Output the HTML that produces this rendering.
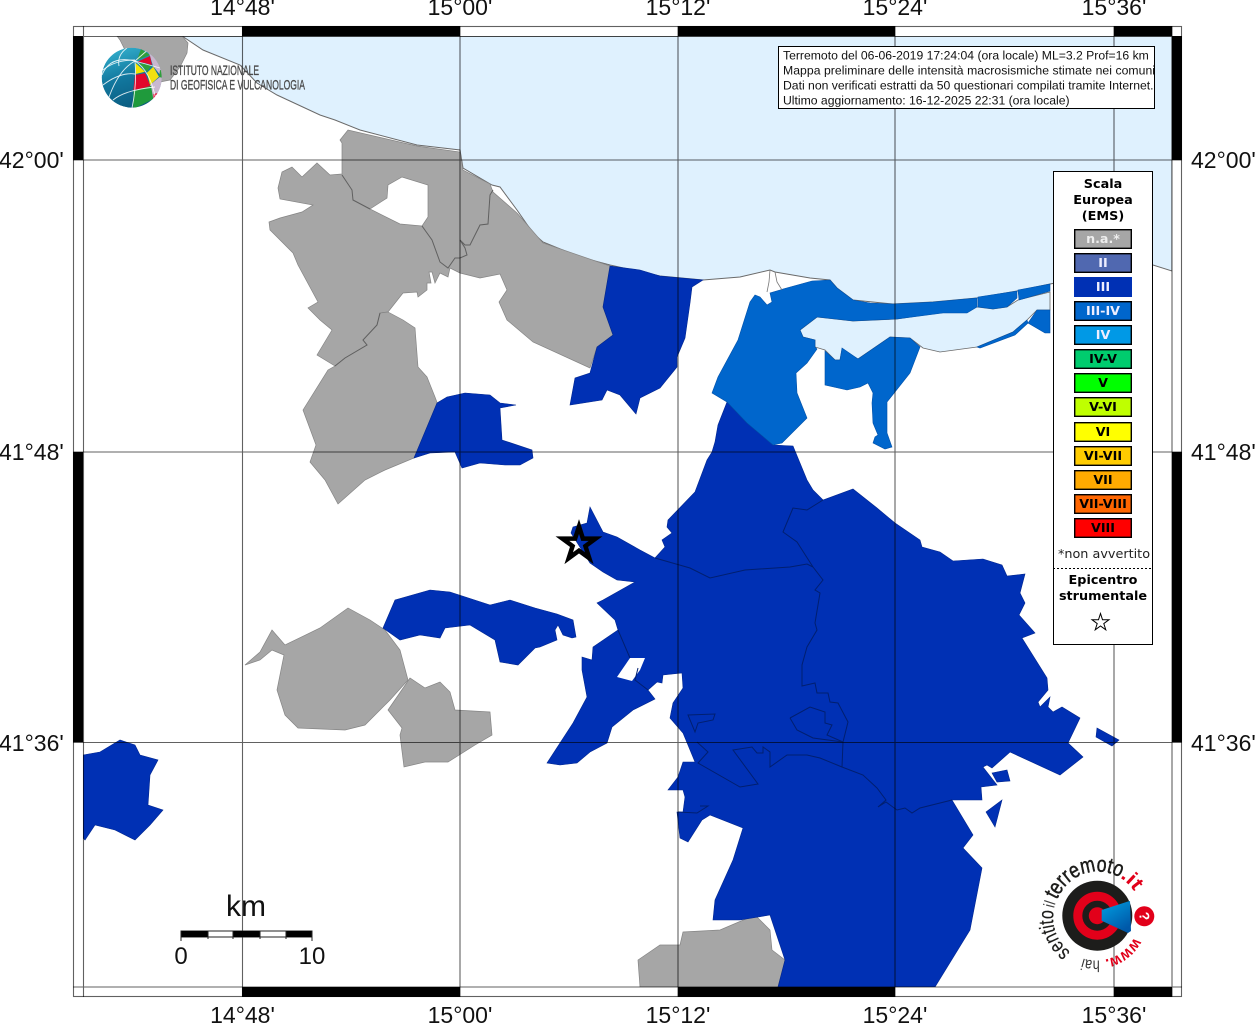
<!DOCTYPE html>
<html><head><meta charset="utf-8"><title>Mappa</title>
<style>
html,body{margin:0;padding:0;background:#fff;width:1255px;height:1024px;overflow:hidden}
svg{display:block}
.lab{font:23px "Liberation Sans",sans-serif;fill:#111}
.sw{font:bold 12.7px "DejaVu Sans",sans-serif;text-anchor:middle}
.lg{font:bold 12.8px "DejaVu Sans",sans-serif;text-anchor:middle;fill:#000}
.info{font:12.2px "Liberation Sans",sans-serif;fill:#111}
.g{fill:#a6a6a6;stroke:#858585;stroke-width:.7}
.b{fill:#0030b4;stroke:#00268f;stroke-width:.6}
.c{fill:#0066cc;stroke:#0050a8;stroke-width:.6}
.il{fill:none;stroke:#001f70;stroke-width:1}
.gl{fill:none;stroke:#606060;stroke-width:1}
</style></head><body>
<svg width="1255" height="1024" viewBox="0 0 1255 1024" xmlns="http://www.w3.org/2000/svg">
<defs>
<clipPath id="map"><rect x="83" y="36" width="1089" height="951"/></clipPath>
<clipPath id="gc"><circle cx="131.7" cy="77.7" r="30"/></clipPath>
<linearGradient id="gb" x1="0.2" y1="0" x2="0.5" y2="1"><stop offset="0" stop-color="#33b0cd"/><stop offset=".5" stop-color="#12789f"/><stop offset="1" stop-color="#0b5c80"/></linearGradient>
<linearGradient id="cone" x1="0" y1="0" x2="0.6" y2="1"><stop offset="0" stop-color="#00a0e3"/><stop offset="1" stop-color="#0058a8"/></linearGradient>
<path id="arc" d="M1134.2 937.5A43 43 0 1 1 1059.8 894.5A43 43 0 1 1 1134.2 937.5"/>
</defs>
<rect width="1255" height="1024" fill="#fff"/>
<g clip-path="url(#map)">
<polygon fill="#dff1fe" stroke="#6a6a6a" stroke-width="1" points="182,36 203,50 240,65 257,83 277,95 320,115 335,120 360,130 417,145 460,150 463,168 492,185 500,187 517,210 533,233 543,242 580,257 610,265 660,276 703,280 740,277 770,270 775,272 810,278 830,280 837,288 853,300 893,304 933,302 977,298 1017,291 1050,284 1153,265 1172,271 1172,36"/>
<polygon fill="#dff1fe" stroke="#6a6a6a" stroke-width=".8" points="800,330 817,317 853,321 897,319 977,307 993,309 1007,307 1018,300 1050,292 1050,310 1037,310 1027,320 1013,332 977,347 940,352 923,348 910,338 890,337 858,359 842,350 840,360 835,360 825,350 815,347 815,340 803,337"/>
<polygon class="g" points="117,36 182,36 188,43 187,53 180,67 170,80 160,82 130,60 120,40"/>
<path class="g" fill-rule="evenodd" d="M340,140 348,130 417,146 460,152 463,170 490,184 493,192 517,213 543,243 610,266 603,307 613,335 597,347 590,368 533,342 507,320 499,302 507,290 500,274 480,278 460,273 450,268 448,277 440,273 435,283 432,272 429,272 431,283 427,283 427,290 418,297 417,292 403,293 388,312 380,313 377,325 363,340 367,345 345,358 335,366 317,355 332,330 320,320 308,308 318,302 298,265 293,253 270,230 269,222 280,218 302,212 313,205 280,199 278,188 282,172 292,167 302,177 317,163 330,175 342,174 342,143Z M370,209 387,198 388,185 402,177 428,185 428,217 422,226 400,224Z"/>
<polygon class="g" points="388,312 403,320 415,328 418,367 427,377 435,397 438,405 414,458 385,470 365,480 338,504 325,480 310,462 316,445 303,410 328,370 335,366 345,358 367,345 363,340 377,325 380,313"/>
<polygon class="g" points="245,665 260,652 272,630 285,645 320,628 348,608 370,620 385,630 400,650 408,680 390,700 365,725 345,730 298,728 285,715 277,690 284,655 272,650 260,660"/>
<polygon class="g" points="388,710 410,678 425,688 440,682 450,692 455,710 490,712 492,735 475,745 448,762 425,762 404,767 400,735 402,728"/>
<polygon class="g" points="640,987 638,960 660,945 680,945 683,932 720,930 755,915 770,930 772,950 785,960 778,987"/>
<polyline class="gl" points="342,175 352,190 353,200 370,209"/>
<polyline class="gl" points="422,226 432,240 440,262 448,268 455,258 460,258 467,255 465,248 460,240 465,245 470,245 480,225 488,224 490,195 493,190"/>
<polyline class="gl" points="380,313 377,325 363,340 367,345 345,358 335,366"/>
<polygon class="b" points="610,266 640,270 660,276 703,280 692,287 690,303 685,338 677,357 677,367 660,388 640,398 636,414 620,395 607,390 602,400 570,405 575,378 590,373 597,347 613,335 603,307"/>
<polygon class="b" points="414,458 437,403 447,397 465,393 490,395 500,403 516,405 500,408 502,440 532,450 533,458 520,465 505,465 480,463 462,468 455,452 430,453"/>
<polygon class="b" points="383,628 395,600 430,590 450,592 490,605 510,600 535,608 557,614 573,620 576,637 572,638 563,635 558,625 555,630 557,640 540,647 535,648 518,665 500,662 495,640 470,625 445,628 440,638 420,635 400,640"/>
<polygon class="b" points="83,755 100,752 120,740 135,745 140,755 158,760 150,775 148,805 163,810 150,825 135,840 115,830 95,825 85,840 83,838"/>
<path class="b" d="M590,507 603,532 617,537 640,550 655,558 665,547 662,540 672,533 667,527 668,520 695,492 707,460 712,452 715,442 718,425 727,402 747,423 773,445 793,446 807,480 813,490 823,500 853,489 877,508 895,523 920,540 922,547 940,552 953,561 983,559 1002,565 1007,576 1025,574 1020,593 1025,603 1019,615 1035,633 1022,638 1047,678 1048,690 1038,702 1040,707 1050,697 1048,707 1053,712 1062,707 1080,718 1068,743 1083,757 1060,775 1010,752 992,768 987,765 983,767 997,785 981,787 982,800 952,800 973,835 963,848 982,868 970,930 935,987 778,987 785,960 770,915 740,920 713,920 715,900 733,860 743,828 710,815 702,820 688,842 680,838 677,812 683,812 685,797 683,790 668,790 678,777 683,762 695,762 683,733 670,718 673,703 683,688 682,673 663,675 662,683 657,682 648,690 655,699 633,710 612,727 607,743 590,752 577,763 560,765 547,763 573,723 587,697 582,670 582,657 592,660 593,647 618,630 615,620 597,603 603,600 635,582 617,580 603,572 590,563 571,533 573,527 587,523Z"/>
<polygon fill="#fff" points="617,677 630,658 645,658 640,670 632,681"/>
<polygon class="b" points="1097,728 1119,740 1112,746 1096,737"/>
<polygon class="b" points="992,773 1007,770 1010,781 997,782"/>
<polygon class="b" points="986,812 1002,800 995,827"/>
<g class="il">
<polyline points="823,500 807,510 793,508 783,532 797,542 813,567 823,580 815,590 820,593 815,623 817,630 807,647 802,665 802,686 815,683 817,693 828,693 830,702 838,703 848,722 843,742 842,767 863,775 877,788 886,800 878,807 886,802 897,810 905,808 912,813 920,808 952,800"/>
<polyline points="655,558 690,568 710,578 745,570 790,567 807,564 813,567"/>
<polyline points="790,718 810,707 825,712 825,723 832,725 827,735 843,742 813,738 797,730 790,718"/>
<polyline points="697,742 708,752 698,763 740,787 758,784 733,750 752,747 757,753 763,753 763,747 770,752 770,767 787,755 807,755 820,758 842,767"/>
<polyline points="618,630 630,658"/><polyline points="638,668 635,680 648,690"/>
<polygon points="688,715 715,714 713,720 698,723 695,732"/>
<polyline points="678,812 697,813 708,806 700,806"/>
</g>
<path class="c" d="M812,281 830,280 837,288 853,300 870,303 893,304 933,302 977,298 977,307 967,313 943,313 897,319 853,321 817,317 800,330 803,337 815,340 815,347 817,349 807,363 796,373 797,393 807,418 782,443 773,445 747,423 727,402 712,393 718,377 738,340 750,302 755,295 760,297 767,305 772,302 770,293 780,290 783,289Z"/>
<path class="c" d="M825,351 835,360 840,360 842,348 858,359 890,337 910,338 920,347 910,373 887,402 887,433 892,447 885,449 873,443 875,437 878,435 873,423 872,403 873,393 868,383 860,387 847,390 825,385Z"/>
<polygon class="c" points="978,297 1017,291 1017,298 1007,307 993,309 978,307"/>
<polygon class="c" points="1018,290 1050,284 1050,291 1019,300"/>
<polygon class="c" points="1028,323 1037,310 1050,310 1050,333 1045,333"/>
<polygon class="c" points="977,347 1013,332 1027,320 1028,323 1015,335 980,348"/>
<polyline fill="none" stroke="#777" stroke-width=".8" points="770,270 769,282 767,292"/>
<polyline fill="none" stroke="#777" stroke-width=".8" points="775,272 777,282 782,290"/>
</g>
<g stroke="#000" fill="none" stroke-width="4.5"><polygon points="579,526.5 582.9,538.6 595.6,538.6 585.4,546.1 589.3,558.2 579,550.7 568.7,558.2 572.6,546.1 562.4,538.6 575.1,538.6"/></g>
<!-- frame -->
<g fill="#000">
<rect x="242" y="26" width="218" height="10"/><rect x="678" y="26" width="217" height="10"/><rect x="1114" y="26" width="58" height="10"/>
<rect x="242" y="987" width="218" height="10"/><rect x="678" y="987" width="217" height="10"/><rect x="1114" y="987" width="58" height="10"/>
<rect x="73" y="36" width="10" height="124"/><rect x="73" y="452" width="10" height="290"/>
<rect x="1172" y="36" width="10" height="124"/><rect x="1172" y="452" width="10" height="290"/>
</g>
<g fill="none" stroke="#000" stroke-opacity=".62" stroke-width="1.1">
<rect x="73.5" y="26.5" width="1108" height="970"/>
<path d="M83.5 26V997M1172 26V997M73 36.5H1182M73 987H1182"/>
<path d="M242.5 26V997M460 26V997M678 26V997M895 26V997M1114 26V997M73 160H1182M73 452H1182M73 742.5H1182"/>
</g>
<!-- labels -->
<g class="lab">
<text x="242.5" y="15" text-anchor="middle">14°48'</text><text x="460" y="15" text-anchor="middle">15°00'</text><text x="678" y="15" text-anchor="middle">15°12'</text><text x="895" y="15" text-anchor="middle">15°24'</text><text x="1114" y="15" text-anchor="middle">15°36'</text>
<text x="242.5" y="1023" text-anchor="middle">14°48'</text><text x="460" y="1023" text-anchor="middle">15°00'</text><text x="678" y="1023" text-anchor="middle">15°12'</text><text x="895" y="1023" text-anchor="middle">15°24'</text><text x="1114" y="1023" text-anchor="middle">15°36'</text>
<text x="-1" y="168">42°00'</text><text x="-1" y="460">41°48'</text><text x="-1" y="751">41°36'</text>
<text x="1191" y="168">42°00'</text><text x="1191" y="460">41°48'</text><text x="1191" y="751">41°36'</text>
</g>
<!-- info -->
<svg x="778" y="46" width="377" height="63" viewBox="778 46 377 63" overflow="hidden">
<rect x="778.5" y="46.5" width="376" height="62" fill="#fff" stroke="#000"/>
<g class="info">
<text x="783" y="59.5">Terremoto del 06-06-2019 17:24:04 (ora locale) ML=3.2 Prof=16 km</text>
<text x="783" y="74.5" textLength="372">Mappa preliminare delle intensità macrosismiche stimate nei comuni</text>
<text x="783" y="89.5">Dati non verificati estratti da 50 questionari compilati tramite Internet.</text>
<text x="783" y="104.5">Ultimo aggiornamento: 16-12-2025 22:31 (ora locale)</text>
</g></svg>
<!-- legend -->
<rect x="1053.5" y="171.5" width="99" height="473" fill="#fff" stroke="#000"/>
<g class="lg"><text x="1103" y="188">Scala</text><text x="1103" y="204">Europea</text><text x="1103" y="220">(EMS)</text></g>
<g stroke="#000" stroke-width="1.4">
<rect x="1074.7" y="229.7" width="56.6" height="18.6" fill="#a6a6a6"/>
<rect x="1074.7" y="253.7" width="56.6" height="18.6" fill="#5068b0"/>
<rect x="1074.7" y="277.7" width="56.6" height="18.6" fill="#0030b4" stroke="#0030b4"/>
<rect x="1074.7" y="301.7" width="56.6" height="18.6" fill="#0066cc"/>
<rect x="1074.7" y="325.7" width="56.6" height="18.6" fill="#0099e6"/>
<rect x="1074.7" y="349.7" width="56.6" height="18.6" fill="#00cc6e"/>
<rect x="1074.7" y="373.7" width="56.6" height="18.6" fill="#00ff00"/>
<rect x="1074.7" y="397.7" width="56.6" height="18.6" fill="#bfff00"/>
<rect x="1074.7" y="422.7" width="56.6" height="18.6" fill="#ffff00"/>
<rect x="1074.7" y="446.7" width="56.6" height="18.6" fill="#ffcc00"/>
<rect x="1074.7" y="470.7" width="56.6" height="18.6" fill="#ffaa00"/>
<rect x="1074.7" y="494.7" width="56.6" height="18.6" fill="#ff6600"/>
<rect x="1074.7" y="518.7" width="56.6" height="18.6" fill="#ff0000"/>
</g>
<g class="sw">
<text x="1103" y="243" fill="#eee">n.a.*</text><text x="1103" y="267" fill="#eef">II</text><text x="1103" y="291" fill="#eef">III</text><text x="1103" y="315" fill="#eef">III-IV</text><text x="1103" y="339" fill="#eef">IV</text>
<text x="1103" y="363">IV-V</text><text x="1103" y="387">V</text><text x="1103" y="411">V-VI</text><text x="1103" y="436">VI</text><text x="1103" y="460">VI-VII</text><text x="1103" y="484">VII</text><text x="1103" y="508">VII-VIII</text><text x="1103" y="532">VIII</text>
</g>
<text x="1104" y="558" text-anchor="middle" font-family="DejaVu Sans" font-size="12.8" fill="#222">*non avvertito</text>
<line x1="1053" y1="568.5" x2="1152" y2="568.5" stroke="#000" stroke-dasharray="2 2"/>
<g class="lg"><text x="1103" y="584">Epicentro</text><text x="1103" y="600">strumentale</text></g>
<polygon fill="#fff" stroke="#000" stroke-width="1" points="1100.5,613.5 1102.5,619.7 1109,619.7 1103.8,623.6 1105.8,629.8 1100.5,626 1095.2,629.8 1097.2,623.6 1092,619.7 1098.5,619.7"/>
<!-- scale -->
<text x="246" y="916" text-anchor="middle" font-family="Liberation Sans" font-size="30" fill="#111">km</text>
<rect x="181" y="931" width="131" height="6" fill="#fff" stroke="#222" stroke-width="1"/>
<g fill="#000"><rect x="181" y="931" width="27" height="6"/><rect x="233" y="931" width="27" height="6"/><rect x="286" y="931" width="26" height="6"/></g>
<path d="M181 931V941M312 931V941M208 931V939M233 931V939M260 931V939M286 931V939" stroke="#222" fill="none"/>
<g font-family="Liberation Sans" font-size="24" fill="#111"><text x="181" y="964" text-anchor="middle">0</text><text x="312" y="964" text-anchor="middle">10</text></g>
<!-- INGV logo -->
<g clip-path="url(#gc)">
<circle cx="131.7" cy="77.7" r="30" fill="url(#gb)"/>
<polygon fill="#c9b8cf" points="148,52 165,60 165,92 152,100 150,85 161,76 153,66 150,56"/>
<polygon fill="#2f9e3b" points="137,60 141,49 150,55"/>
<polygon fill="#e2062b" points="137,62 150,56 152,65 145,63"/>
<polygon fill="#f4e500" points="135.7,63 145,71.7 135.7,74"/>
<polygon fill="#2f9e3b" points="138,63 151.7,65 147.3,71.7"/>
<polygon fill="#f0e010" points="147,72.7 153.3,66.7 159,76.7 150,85"/>
<polygon fill="#e2062b" points="135,75 145,73.3 150,85 150,87 133.3,90"/>
<polygon fill="#1f9a3c" points="133.3,91 151,85.7 153.3,99 133.3,109"/>
<polygon fill="#e2062b" points="153.5,94 158,93 153.5,99"/>
<polygon fill="#2f9e3b" points="160,70 163,70 163,78 159,77"/>
<g fill="none" stroke="#fff" stroke-opacity=".85" stroke-width=".9">
<path d="M135 61Q137 85 132 108"/><path d="M135 61Q118 70 108 100"/><path d="M135 61Q110 55 102 75"/><path d="M127 48Q117 55 119 66"/>
<path d="M135 61Q150 70 156 100"/><path d="M135 61L150 48"/><path d="M103 70Q115 60 135 60"/>
<path d="M103 85Q120 72 135 74"/><path d="M113 100Q125 90 155 87"/><path d="M135 61L160 68"/>
</g>
</g>
<g font-family="Liberation Sans" font-size="14" fill="#4a4a4a" stroke="#4a4a4a" stroke-width=".35">
<text x="170" y="75" textLength="89" lengthAdjust="spacingAndGlyphs">ISTITUTO NAZIONALE</text>
<text x="170" y="89.5" textLength="135" lengthAdjust="spacingAndGlyphs">DI GEOFISICA E VULCANOLOGIA</text>
</g>
<!-- hai sentito logo -->
<circle cx="1097.3" cy="915.7" r="35" fill="#1d1d1b"/>
<circle cx="1097.3" cy="915.7" r="19.5" fill="none" stroke="#e2001a" stroke-width="9"/>
<circle cx="1097.3" cy="915.7" r="8.5" fill="#e2001a"/>
<polygon fill="url(#cone)" points="1101.7,910 1128,901.5 1130,901 1131,931 1128,933 1101.7,920.7"/>
<circle cx="1144.3" cy="916.3" r="10" fill="#e2001a"/>
<text x="1144.3" y="921" font-family="Liberation Sans" font-weight="bold" font-size="14" fill="#fff" text-anchor="middle" transform="rotate(80 1144.3 916.3)">?</text>
<g font-family="Liberation Sans" fill="#1d1d1b">
<text font-weight="bold" font-size="16" fill="#e2001a"><textPath href="#arc" startOffset="0" textLength="38" lengthAdjust="spacingAndGlyphs">www.</textPath></text>
<text font-size="16" fill="#333"><textPath href="#arc" startOffset="43" textLength="17" lengthAdjust="spacingAndGlyphs">hai</textPath></text>
<text font-size="21" stroke="#1d1d1b" stroke-width=".2"><textPath href="#arc" startOffset="74" textLength="47" lengthAdjust="spacingAndGlyphs">sentito</textPath></text>
<text font-size="16" fill="#444"><textPath href="#arc" startOffset="123" textLength="6" lengthAdjust="spacingAndGlyphs">il</textPath></text>
<text font-size="22" stroke="#1d1d1b" stroke-width=".5"><textPath href="#arc" startOffset="132" textLength="76" lengthAdjust="spacingAndGlyphs">terremoto</textPath></text>
<text font-size="20" font-weight="bold" fill="#e2001a"><textPath href="#arc" startOffset="208" textLength="20" lengthAdjust="spacingAndGlyphs">.it</textPath></text>
</g>
</svg>
</body></html>
